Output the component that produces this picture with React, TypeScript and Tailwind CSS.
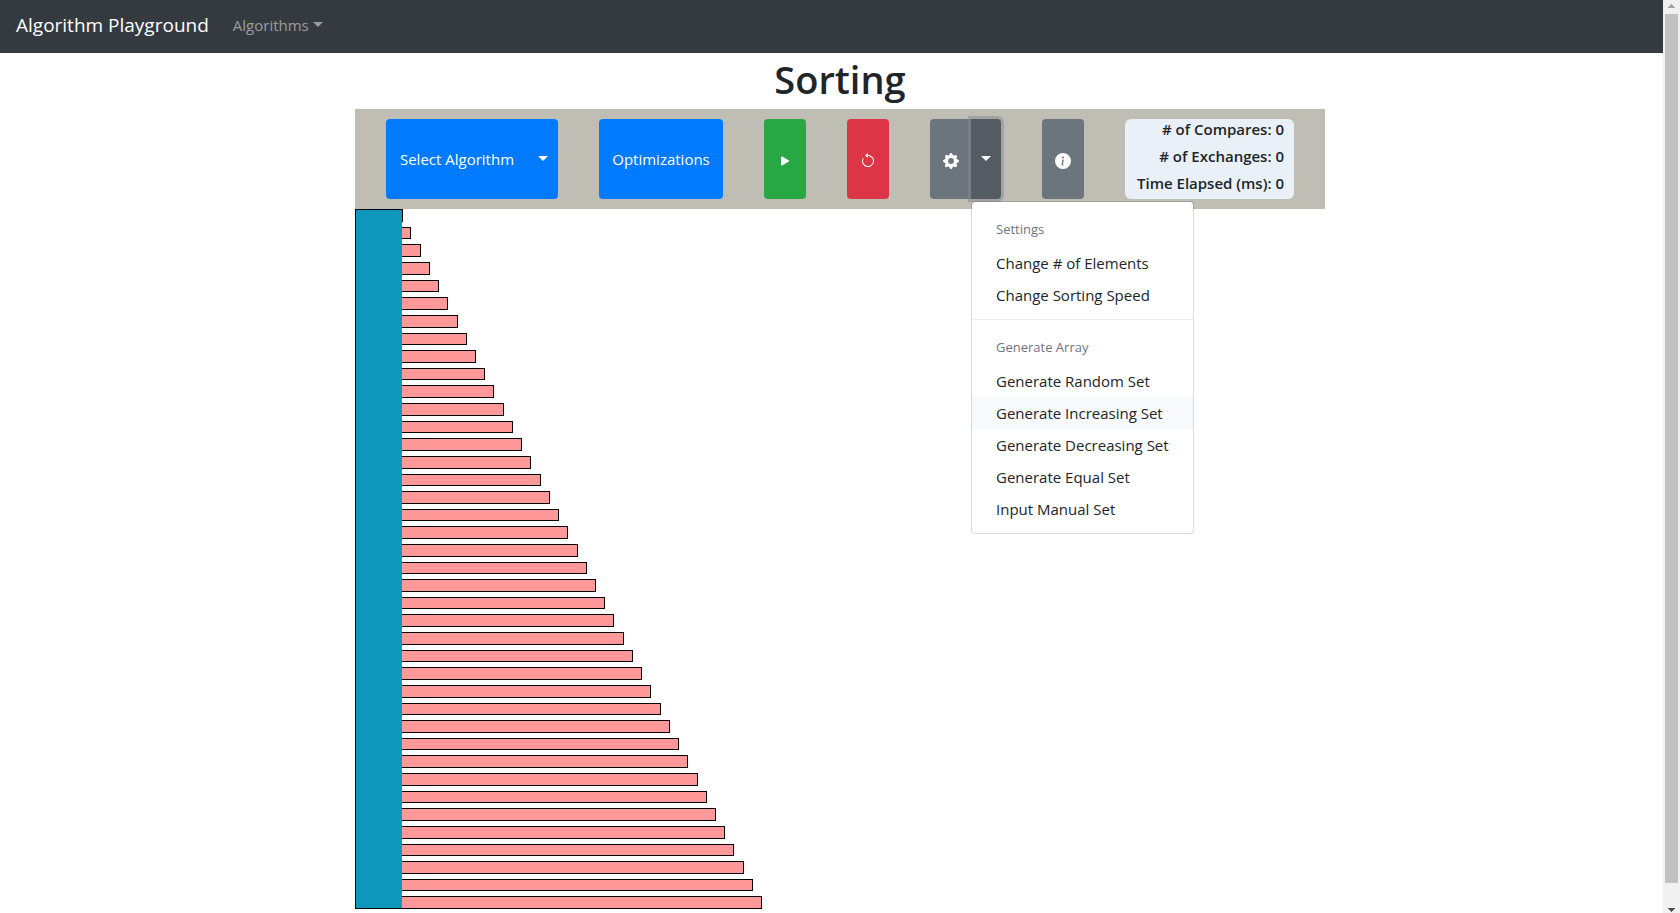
import React from "react";
import { BsArrowCounterclockwise, BsGearFill, BsInfoCircleFill, BsPlayFill } from "react-icons/bs";

const BAR_COUNT = 40;

function Caret() {
  return (
    <svg aria-hidden="true" width="10" height="5" viewBox="0 0 10 5" className="shrink-0 fill-current">
      <path d="M0 0h10L5 5z" />
    </svg>
  );
}

function Navbar() {
  return (
    <nav className="flex h-[53px] items-center bg-[#343a40] px-4 pb-1">
      <a href="#" className="mr-4 text-[19px] leading-[30px] text-white">
        Algorithm Playground
      </a>
      <button type="button" className="flex items-center gap-1 px-2 text-[15px] leading-6 text-white/50">
        Algorithms
        <Caret />
      </button>
    </nav>
  );
}

function BarChart() {
  const bars = Array.from({ length: BAR_COUNT }, (_, i) => {
    const top = Math.round(0.22 + i * 17.62);
    const bottom = Math.round(12.84 + i * 17.62);
    const right = Math.max(48, Math.round(47.14 + i * 9.23));
    return { top, bottom, right };
  });
  return (
    <svg
      role="img"
      aria-label="Array elements"
      width="970"
      height="700"
      viewBox="0 0 970 700"
      shapeRendering="crispEdges"
      className="block"
    >
      <rect x="0" y="0" width="47" height="700" fill="#000" />
      {bars.map((bar) => (
        <g key={bar.top}>
          <rect x="0" y={bar.top} width={bar.right} height={bar.bottom - bar.top} fill="#000" />
          <rect x="1" y={bar.top + 1} width={bar.right - 2} height={bar.bottom - bar.top - 2} fill="#ff9999" />
        </g>
      ))}
      <rect x="1" y="1" width="46" height="698" fill="#0e97bb" />
    </svg>
  );
}

function MenuHeader({ children }: { children: React.ReactNode }) {
  return <h6 className="px-6 pt-[9px] pb-[7px] text-[13px] leading-[21px] text-[#6c757d]">{children}</h6>;
}

function MenuItem({ children, active = false }: { children: React.ReactNode; active?: boolean }) {
  return (
    <button
      type="button"
      role="menuitem"
      className={`block w-full px-6 py-1 text-left text-[15px] leading-6 whitespace-nowrap text-[#212529] hover:bg-[#f8f9fa] ${
        active ? "bg-[#f8f9fa]" : ""
      }`}
    >
      {children}
    </button>
  );
}

function SettingsMenu() {
  return (
    <div
      role="menu"
      className="absolute top-full left-[41px] z-10 mt-0.5 w-[223px] rounded border border-black/15 bg-white bg-clip-padding py-2"
    >
      <MenuHeader>Settings</MenuHeader>
      <MenuItem>Change # of Elements</MenuItem>
      <MenuItem>Change Sorting Speed</MenuItem>
      <hr className="my-2 border-[#e9ecef]" />
      <MenuHeader>Generate Array</MenuHeader>
      <MenuItem>Generate Random Set</MenuItem>
      <MenuItem active>Generate Increasing Set</MenuItem>
      <MenuItem>Generate Decreasing Set</MenuItem>
      <MenuItem>Generate Equal Set</MenuItem>
      <MenuItem>Input Manual Set</MenuItem>
    </div>
  );
}

function Toolbar() {
  const button = "flex h-20 items-center justify-center text-[15px] leading-6 text-white";
  return (
    <div className="flex justify-between bg-[#c0bdb5] px-[31px] py-2.5">
      <div className="flex">
        <button type="button" className={`${button} w-[142px] rounded-l bg-[#007bff]`}>
          Select Algorithm
        </button>
        <button type="button" aria-label="Choose algorithm" className={`${button} w-[30px] rounded-r bg-[#007bff] pb-0.5`}>
          <Caret />
        </button>
      </div>
      <button type="button" className={`${button} w-[124px] rounded bg-[#007bff]`}>
        Optimizations
      </button>
      <button type="button" aria-label="Play" className={`${button} w-[42px] rounded bg-[#28a745]`}>
        <BsPlayFill className="mt-1 size-4" />
      </button>
      <button type="button" aria-label="Reset" className={`${button} w-[42px] rounded bg-[#dc3545]`}>
        <BsArrowCounterclockwise className="mt-1 size-4" />
      </button>
      <div className="relative flex">
        <button type="button" aria-label="Settings" className={`${button} w-[41px] rounded-l bg-[#6c757d]`}>
          <BsGearFill className="mt-1 size-4" />
        </button>
        <button
          type="button"
          aria-label="Open settings menu"
          aria-expanded="true"
          className={`${button} w-[30px] rounded-r bg-[#545b62] pb-0.5 ring-3 ring-[#828a91]/50`}
        >
          <Caret />
        </button>
        <SettingsMenu />
      </div>
      <button type="button" aria-label="Information" className={`${button} w-[42px] rounded bg-[#6c757d]`}>
        <BsInfoCircleFill className="mt-1 size-4" />
      </button>
      <div className="flex h-20 w-[169px] flex-col justify-end rounded-md bg-[#e9f0f8] pr-2.5 pb-0.5 text-right text-[15px] leading-[27px] font-semibold whitespace-nowrap text-[#212529]">
        <p># of Compares: 0</p>
        <p># of Exchanges: 0</p>
        <p>Time Elapsed (ms): 0</p>
      </div>
    </div>
  );
}

function Scrollbar() {
  return (
    <div aria-hidden="true" className="fixed inset-y-0 right-0 z-20 flex w-[17px] flex-col items-center bg-[#f1f1f1]">
      <svg width="7" height="14" viewBox="0 0 7 14" shapeRendering="crispEdges" fill="#a3a3a3">
        <path d="M3 4h1v1h1v1h1v1h1v1H0V7h1V6h1V5h1z" />
      </svg>
      <div className="w-[13px] flex-1 bg-[#c1c1c1]" />
      <svg width="7" height="30" viewBox="0 0 7 30" shapeRendering="crispEdges" fill="#505050">
        <path d="M0 25h7v1H6v1H5v1H4v1H3v-1H2v-1H1v-1H0z" />
      </svg>
    </div>
  );
}

export default function App() {
  return (
    <div className="min-h-screen bg-white font-['Open_Sans',sans-serif] text-[#212529]">
      <Navbar />
      <main className="mx-auto w-full max-w-[970px]">
        <h1 className="pt-0.5 pb-1.5 text-center text-[38px] leading-[48px] font-semibold">Sorting</h1>
        <Toolbar />
        <BarChart />
      </main>
      <Scrollbar />
    </div>
  );
}
